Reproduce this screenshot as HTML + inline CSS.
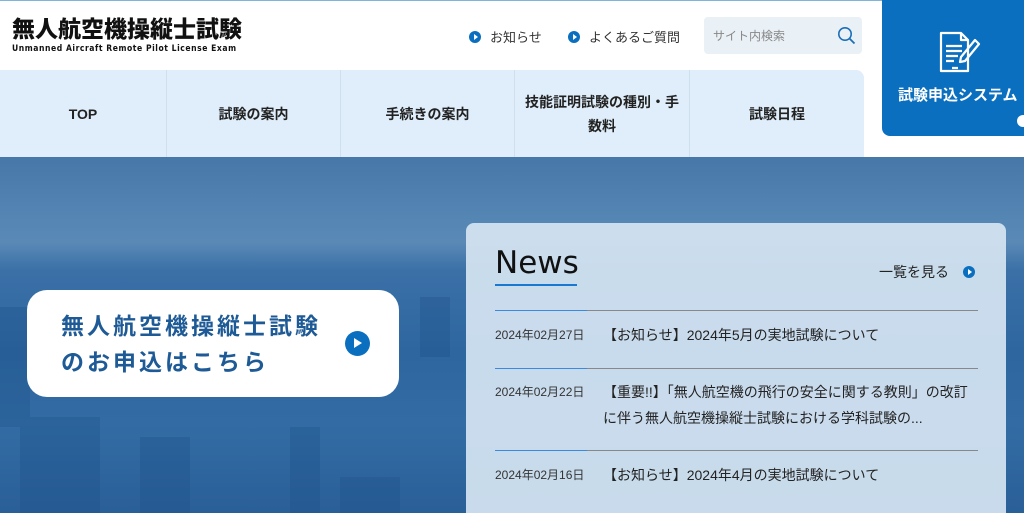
<!DOCTYPE html>
<html><head><meta charset="utf-8"><style>
*{margin:0;padding:0;box-sizing:border-box}
html,body{width:1024px;height:513px;overflow:hidden}
body{font-family:"Liberation Sans","Noto Sans CJK JP",sans-serif;background:#fff;position:relative;color:#222}
.topline{position:absolute;left:0;top:0;width:1024px;height:1px;background:#7fb4dc}
.logo{position:absolute;left:12px;top:16px;font-size:23px;font-weight:900;color:#111;line-height:26px}
.logo small{display:block;font-size:8.5px;font-weight:700;letter-spacing:0.55px;line-height:12px;margin-top:1px;font-family:"DejaVu Sans Condensed","Liberation Sans",sans-serif}
.tl{position:absolute;top:27px;font-size:13px;color:#333;display:flex;align-items:center}
.dot{display:inline-block;width:12px;height:12px;border-radius:50%;background:#0b6fc0;position:relative;margin-right:9px}
.dot:after{content:"";position:absolute;left:4.5px;top:3px;border-left:4px solid #fff;border-top:3px solid transparent;border-bottom:3px solid transparent}
.search{position:absolute;left:704px;top:17px;width:158px;height:37px;background:#e9f0f6;border-radius:4px;font-size:12px;color:#888;padding:10px 9px}
.nav{position:absolute;left:0;top:70px;width:864px;height:87px;background:#dfeefa;border-top-right-radius:8px;display:flex}
.nav div{height:87px;display:flex;align-items:center;justify-content:center;text-align:center;font-size:14px;font-weight:700;border-right:1px solid #cfdfec;line-height:24px;color:#222}
.apply{position:absolute;left:882px;top:0;width:142px;height:136px;background:#0b6fc0;border-bottom-left-radius:8px;color:#fff}
.hero{position:absolute;left:0;top:157px;width:1024px;height:356px;background:linear-gradient(180deg,#4677a8 0%,#5586b4 18%,#5a89b6 24%,#3a70a6 32%,#2e66a0 55%,#336ca4 75%,#2a5f98 100%)}
.cta{position:absolute;left:27px;top:290px;width:372px;height:107px;background:#fff;border-radius:20px;color:#1d5a96;font-weight:700;font-size:23px;letter-spacing:3px;line-height:36px;padding:18px 0 0 34px;white-space:nowrap}
.cta .pl{position:absolute;left:318px;top:41px;width:25px;height:25px;border-radius:50%;background:#0b6fc0}
.cta .pl:after{content:"";position:absolute;left:9px;top:7px;border-left:8px solid #fff;border-top:5.5px solid transparent;border-bottom:5.5px solid transparent}
.news{position:absolute;left:466px;top:223px;width:540px;height:300px;background:rgba(214,229,242,0.92);border-radius:8px}
.news h2{position:absolute;left:29px;top:22px;font-size:31px;font-weight:400;color:#111;font-family:"DejaVu Sans","Liberation Sans",sans-serif}
.news .ul{position:absolute;left:29px;top:61px;width:82px;height:2px;background:#1a78d0}
.more{position:absolute;left:413px;top:39px;font-size:14px;color:#222;display:flex;align-items:center}
.more .dot{margin-left:14px;margin-right:0}
.hr{position:absolute;left:29px;width:483px;height:1px;background:#888}
.hr:before{content:"";position:absolute;left:0;top:0;width:92px;height:1px;background:#3a8ae0}
.item{position:absolute;left:29px;font-size:14px;color:#222;line-height:26px}
.item .d{position:absolute;left:0;top:0;font-size:12px;color:#333;white-space:nowrap}
.item .t{position:absolute;left:108px;top:0;width:375px}
</style></head><body>
<div class="topline"></div>
<div class="logo">無人航空機操縦士試験<small>Unmanned Aircraft Remote Pilot License Exam</small></div>
<div class="tl" style="left:469px"><span class="dot"></span>お知らせ</div>
<div class="tl" style="left:568px"><span class="dot"></span>よくあるご質問</div>
<div class="search">サイト内検索
<svg style="position:absolute;right:6px;top:9px" width="19" height="19" viewBox="0 0 19 19"><circle cx="8" cy="8" r="6.2" fill="none" stroke="#1a6fb8" stroke-width="1.6"/><path d="M12.5 12.5L17.5 17.5" stroke="#1a6fb8" stroke-width="1.8"/></svg></div>
<div class="nav">
<div style="width:167px">TOP</div>
<div style="width:174px">試験の案内</div>
<div style="width:174px">手続きの案内</div>
<div style="width:175px">技能証明試験の種別・手<br>数料</div>
<div style="width:174px;border-right:none">試験日程</div>
</div>
<div class="apply">
<svg style="position:absolute;left:56px;top:31px" width="44" height="44" viewBox="0 0 44 44" fill="none" stroke="#fff" stroke-width="2.2" stroke-linejoin="round"><path d="M3 2h20l7 7v31H3z"/><path d="M23 2v7h7"/><path d="M8 15h16M8 20h16M8 25h12M8 30h8M14 37h6"/><path d="M37 9l4 4-14 17-5 1 1-5z"/></svg>
<div style="position:absolute;left:16px;top:84px;font-size:15px;font-weight:700;white-space:nowrap">試験申込システム</div>
<div style="position:absolute;left:135px;top:115px;width:12px;height:12px;border-radius:50%;background:#fff"></div>
</div>
<div class="hero">
<svg width="1024" height="356" style="position:absolute;left:0;top:0" opacity="0.3">
<g fill="#1b4f86">
<rect x="20" y="260" width="80" height="96"/><rect x="140" y="280" width="50" height="76"/><rect x="290" y="270" width="30" height="86"/><rect x="340" y="320" width="60" height="36"/><rect x="0" y="150" width="30" height="120"/><rect x="420" y="140" width="30" height="60"/>
</g>
</svg>
</div>
<div class="cta">無人航空機操縦士試験<br>のお申込はこちら<span class="pl"></span></div>
<div class="news">
<h2>News</h2><div class="ul"></div>
<div class="more">一覧を見る<span class="dot"></span></div>
<div class="hr" style="top:87px"></div>
<div class="item" style="top:99px"><span class="d">2024年02月27日</span><span class="t">【お知らせ】2024年5月の実地試験について</span></div>
<div class="hr" style="top:145px"></div>
<div class="item" style="top:156px"><span class="d">2024年02月22日</span><span class="t">【重要!!】「無人航空機の飛行の安全に関する教則」の改訂に伴う無人航空機操縦士試験における学科試験の...</span></div>
<div class="hr" style="top:227px"></div>
<div class="item" style="top:239px"><span class="d">2024年02月16日</span><span class="t">【お知らせ】2024年4月の実地試験について</span></div>
</div>
</body></html>
